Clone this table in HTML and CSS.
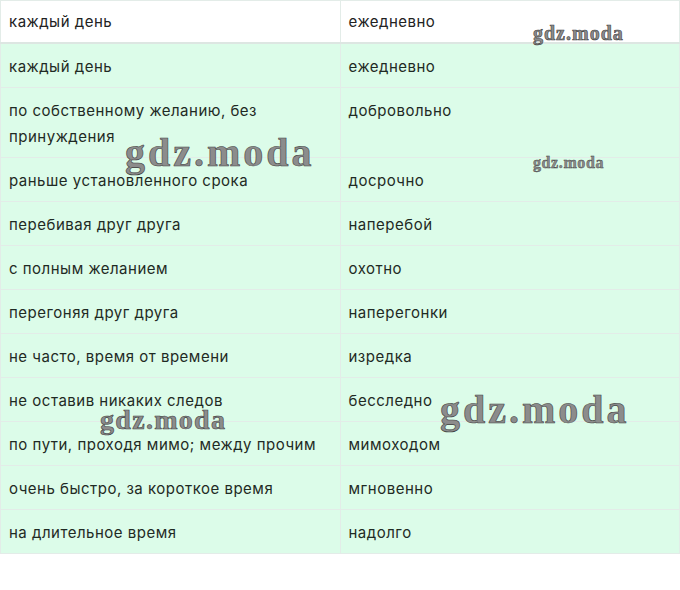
FILE: index.html
```html
<!DOCTYPE html>
<html lang="ru">
<head>
<meta charset="utf-8">
<link rel="stylesheet" href="styles.css">
</head>
<body>
<div class="page">
  <table class="tbl">
    <thead>
      <tr><th>каждый день</th><th>ежедневно</th></tr>
    </thead>
    <tbody>
      <tr><td>каждый день</td><td>ежедневно</td></tr>
      <tr><td>по собственному желанию, без принуждения</td><td>добровольно</td></tr>
      <tr><td>раньше установленного срока</td><td>досрочно</td></tr>
      <tr><td>перебивая друг друга</td><td>наперебой</td></tr>
      <tr><td>с полным желанием</td><td>охотно</td></tr>
      <tr><td>перегоняя друг друга</td><td>наперегонки</td></tr>
      <tr><td>не часто, время от времени</td><td>изредка</td></tr>
      <tr><td>не оставив никаких следов</td><td>бесследно</td></tr>
      <tr><td>по пути, проходя мимо; между прочим</td><td>мимоходом</td></tr>
      <tr><td>очень быстро, за короткое время</td><td>мгновенно</td></tr>
      <tr><td>на длительное время</td><td>надолго</td></tr>
    </tbody>
  </table>
  <span class="wm wm-s1">gdz.moda</span>
  <span class="wm wm-l1">gdz.moda</span>
  <span class="wm wm-s2">gdz.moda</span>
  <span class="wm wm-m1">gdz.moda</span>
  <span class="wm wm-l2">gdz.moda</span>
</div>
</body>
</html>
```

FILE: styles.css
```css
html, body {
  margin: 0;
  padding: 0;
  background: #ffffff;
}

.page {
  position: relative;
  width: 680px;
  height: 590px;
}

.tbl {
  width: 680px;
  border-collapse: collapse;
  font-family: Inter, "Noto Sans", sans-serif;
  font-size: 15px;
  letter-spacing: 0.5px;
  color: #1f2a24;
  table-layout: fixed;
}

.tbl th,
.tbl td {
  text-align: left;
  font-weight: 400;
  vertical-align: top;
  width: 50%;
  border: 1px solid #e3ece8;
}

.tbl th {
  background: #ffffff;
  padding: 9px 9px 8px 8px;
  line-height: 24px;
  height: 24px;
  border-bottom: 2px solid #dde6e2;
  color: #222;
}

.tbl td {
  background: #dcfce9;
  padding: 10px 9px 7px 8px;
  line-height: 26px;
}

.wm {
  position: absolute;
  font-family: "Liberation Serif", "DejaVu Serif", serif;
  font-weight: 700;
  color: #8c8c8c;
  -webkit-text-stroke: 0.6px #3f3f3f;
  white-space: nowrap;
  line-height: 1;
}

.wm-s1 {
  left: 533px;
  top: 23px;
  font-size: 20px;
  letter-spacing: 1px;
}

.wm-l1 {
  left: 125px;
  top: 133px;
  font-size: 40px;
  letter-spacing: 3px;
}

.wm-s2 {
  left: 533px;
  top: 155px;
  font-size: 16px;
  letter-spacing: 0.6px;
  -webkit-text-stroke: 0.4px #3f3f3f;
}

.wm-m1 {
  left: 100px;
  top: 406px;
  font-size: 28px;
  letter-spacing: 1.3px;
}

.wm-l2 {
  left: 440px;
  top: 390px;
  font-size: 40px;
  letter-spacing: 3px;
}
```
